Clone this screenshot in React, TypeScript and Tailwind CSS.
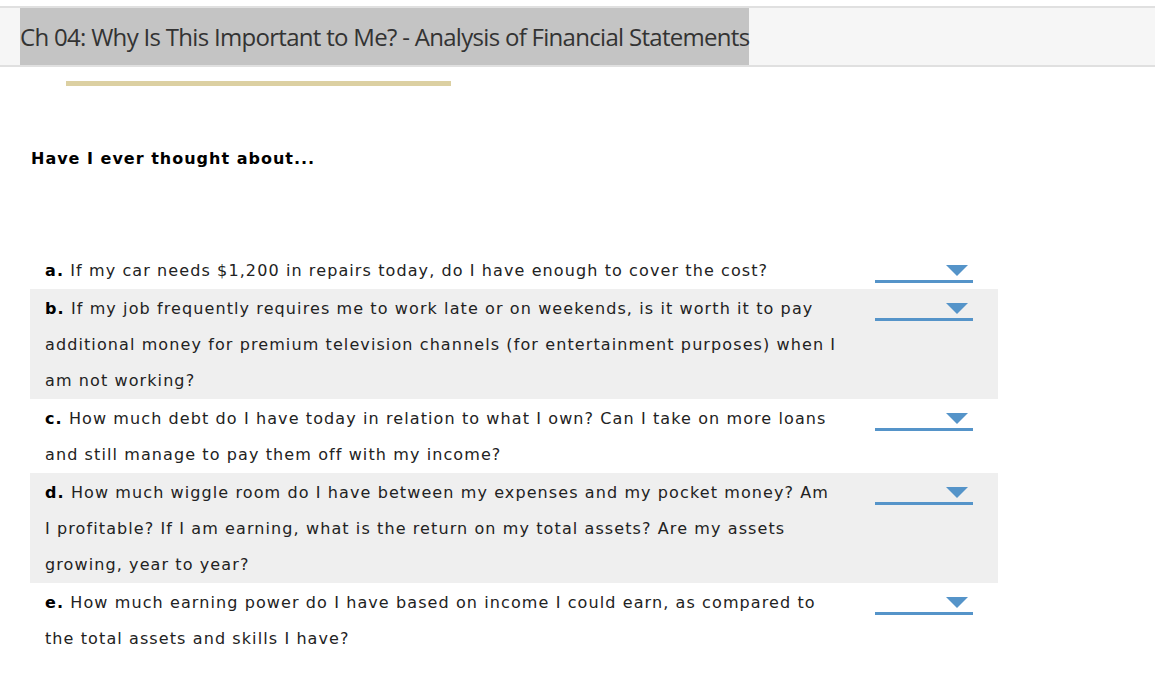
import { ReactNode } from 'react';

type Question = { letter: string; text: ReactNode };

const questions: Question[] = [
  { letter: 'a.', text: 'If my car needs $1,200 in repairs today, do I have enough to cover the cost?' },
  {
    letter: 'b.',
    text: 'If my job frequently requires me to work late or on weekends, is it worth it to pay additional money for premium television channels (for entertainment purposes) when I am not working?',
  },
  {
    letter: 'c.',
    text: 'How much debt do I have today in relation to what I own? Can I take on more loans and still manage to pay them off with my income?',
  },
  {
    letter: 'd.',
    text: (
      <>
        How much wiggle room do I have between my expenses and my pocket money? Am
        <br />I profitable? If I am earning, what is the return on my total assets? Are my assets growing, year to year?
      </>
    ),
  },
  {
    letter: 'e.',
    text: 'How much earning power do I have based on income I could earn, as compared to the total assets and skills I have?',
  },
];

const Dropdown = () => (
  <div className="relative w-[98px] h-[30px] border-b-[3px] border-[#5594c9]">
    <svg className="absolute right-[5px] top-[12px]" width="22" height="11" viewBox="0 0 22 11">
      <polygon points="0,0 22,0 11,11" fill="#5594c9" />
    </svg>
  </div>
);

const Row = ({ q, shaded }: { q: Question; shaded: boolean }) => (
  <div className={shaded ? 'flex bg-[#efefef] pt-[2px]' : 'flex pt-[2px]'}>
    <div className="w-[813px] pl-[15px] leading-[36px] text-[16px] text-[#222] tracking-[1.1px]">
      <b className="text-black">{q.letter}</b> {q.text}
    </div>
    <div className="pl-[32px]">
      <Dropdown />
    </div>
  </div>
);

const Section = ({ children }: { children: ReactNode }) => (
  <div className="w-[968px] ml-[30px]">{children}</div>
);

export default function App() {
  return (
    <div className="w-[1155px] h-[680px] bg-white overflow-hidden" style={{ fontFamily: 'Verdana, "DejaVu Sans", sans-serif' }}>
      <div className="h-[6px]" />
      <div className="border-y-2 border-[#e0e0e0] bg-[#f6f6f6] h-[61px] pl-[20px]">
        <div
          className="inline-block bg-[#c4c4c4] h-[57px] leading-[57px] text-[24px] text-[#333] tracking-[-0.7px]"
          style={{ fontFamily: '"Open Sans", sans-serif' }}
        >
          Ch 04: Why Is This Important to Me? - Analysis of Financial Statements
        </div>
      </div>
      <div className="ml-[66px] mt-[14px] w-[385px] h-[5px] bg-[#dcd0a2]" />
      <div className="ml-[31px] mt-[63px] text-[16px] font-bold text-black leading-[20px] tracking-[1px]">
        Have I ever thought about...
      </div>
      <div className="mt-[82px]">
        <Section>
          {questions.map((q, i) => (
            <Row key={q.letter} q={q} shaded={i % 2 === 1} />
          ))}
        </Section>
      </div>
    </div>
  );
}
